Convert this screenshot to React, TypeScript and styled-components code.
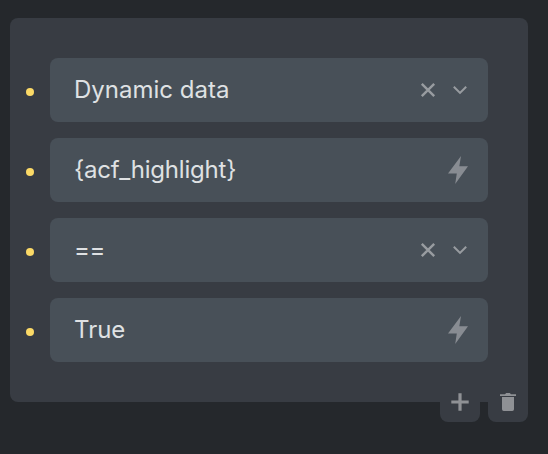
import React from "react";
import styled, { createGlobalStyle } from "styled-components";

const GlobalStyle = createGlobalStyle`
  * { box-sizing: border-box; }
  body {
    margin: 0;
    background: #25282c;
    font-family: Inter, "Liberation Sans", sans-serif;
  }
`;

const Page = styled.main`
  height: 454px;
  padding: 18px 20px 0 10px;
  overflow: hidden;
`;

const Panel = styled.section`
  display: flex;
  flex-direction: column;
  gap: 16px;
  height: 384px;
  padding: 40px 40px 40px 16px;
  border-radius: 8px 8px 0 8px;
  background: #383c43;
`;

const Row = styled.div`
  display: flex;
  align-items: center;
  gap: 16px;
`;

const Dot = styled.span`
  width: 8px;
  height: 8px;
  margin-top: 4px;
  border-radius: 50%;
  background: #fbd966;
`;

const Field = styled.div`
  display: flex;
  flex: 1;
  align-items: center;
  justify-content: space-between;
  height: 64px;
  padding: 0 20px 0 24px;
  border-radius: 8px;
  background: #485058;
  color: #dfe1e3;
`;

const Value = styled.span<{ $tracking?: number }>`
  font-size: 24px;
  font-weight: 400;
  line-height: 32px;
  letter-spacing: ${(p) => p.$tracking ?? 0}px;
  font-feature-settings: "calt" 0;
  white-space: pre;
`;

const Controls = styled.div`
  display: flex;
  align-items: center;
  gap: 16px;
  color: #989ca0;
  svg { display: block; }
`;

const Actions = styled.div`
  display: flex;
  justify-content: flex-end;
  gap: 8px;
`;

const ActionButton = styled.button`
  display: flex;
  justify-content: center;
  width: 40px;
  height: 20px;
  padding: 0;
  border: 0;
  border-radius: 0 0 8px 8px;
  background: #383c43;
  color: #8f9195;
  svg { flex: none; display: block; margin-top: -12px; }
`;

const ClearIcon = () => (
  <svg width="16" height="16" viewBox="0 0 16 16" fill="none" stroke="currentColor" strokeWidth="2.4">
    <path d="M1.8 1.8 14.2 14.2M14.2 1.8 1.8 14.2" />
  </svg>
);

const ChevronIcon = () => (
  <svg width="16" height="16" viewBox="0 0 16 16" fill="none" stroke="currentColor" strokeWidth="2">
    <path d="M1.8 4.7 8 10.9l6.2-6.2" />
  </svg>
);

const BoltIcon = () => (
  <svg width="20" height="30" viewBox="0 0 20 30" fill="#888c92">
    <path d="M13 1 11.3 11.3H20L7.2 29 8.8 18.5H0Z" />
  </svg>
);

const PlusIcon = () => (
  <svg width="24" height="24" viewBox="0 0 24 24" fill="none" stroke="currentColor" strokeWidth="3.2">
    <path d="M3.3 12h17.4M12 3.3v17.4" />
  </svg>
);

const TrashIcon = () => (
  <svg width="24" height="24" viewBox="0 0 24 24" fill="currentColor">
    <path d="M4 4.2h5L10.2 3h3.6L15 4.2h5V6H4ZM6 7h12v12.3a1.7 1.7 0 0 1-1.7 1.7H7.7A1.7 1.7 0 0 1 6 19.3Z" />
  </svg>
);

type RowData = { value: string; kind: "select" | "dynamic"; tracking?: number };

const rows: RowData[] = [
  { value: "Dynamic data", kind: "select" },
  { value: "{acf_highlight}", kind: "dynamic", tracking: -0.2 },
  { value: "==", kind: "select", tracking: -0.5 },
  { value: "True", kind: "dynamic" },
];

export default function App() {
  return (
    <>
      <GlobalStyle />
      <Page>
        <Panel>
          {rows.map((row) => (
            <Row key={row.value}>
              <Dot />
              <Field>
                <Value $tracking={row.tracking}>{row.value}</Value>
                <Controls>
                  {row.kind === "select" ? (
                    <>
                      <ClearIcon />
                      <ChevronIcon />
                    </>
                  ) : (
                    <BoltIcon />
                  )}
                </Controls>
              </Field>
            </Row>
          ))}
        </Panel>
        <Actions>
          <ActionButton aria-label="Add condition"><PlusIcon /></ActionButton>
          <ActionButton aria-label="Delete condition"><TrashIcon /></ActionButton>
        </Actions>
      </Page>
    </>
  );
}
